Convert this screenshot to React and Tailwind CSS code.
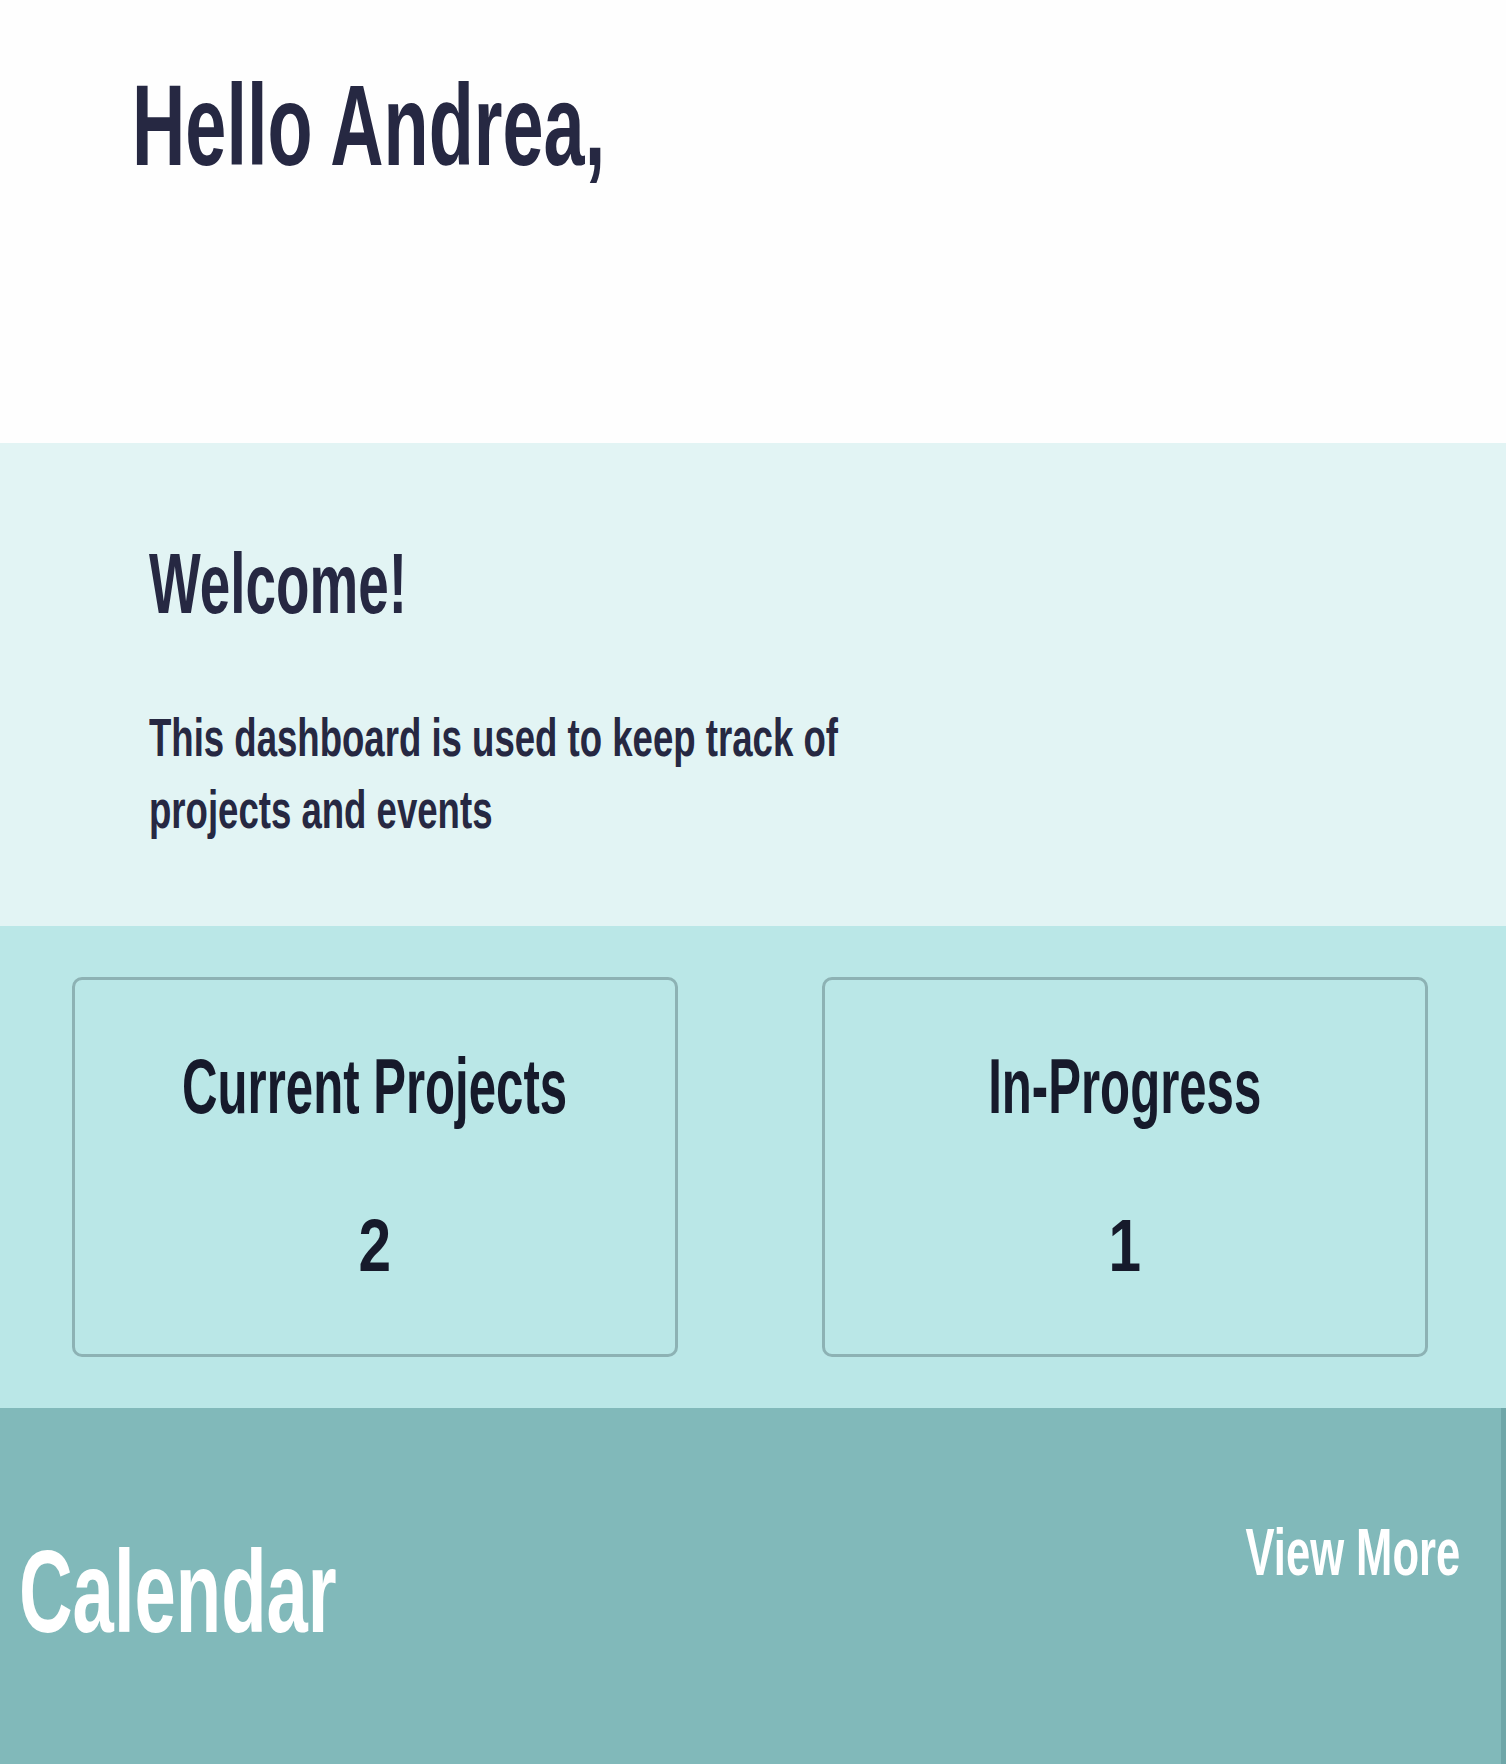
import React from 'react';

// Condensed heading look: Liberation Sans Bold squeezed horizontally
const font = "font-['Liberation_Sans',Arial,sans-serif] font-bold";

const StatCard = ({ title, value }) => (
    <div className="w-[606px] h-[380px] shrink-0 rounded-[10px] border-[3px] border-[#8db2b4] flex flex-col items-center">
        <div className="w-full flex justify-center mt-[67px]">
            <span className={`${font} inline-block whitespace-nowrap text-[78px] leading-none text-[#161a2b] origin-center scale-x-[0.63]`}>
                {title}
            </span>
        </div>
        <div className="w-full flex justify-center mt-[83px]">
            <span className={`${font} inline-block text-[75px] leading-none text-[#161a2b] origin-center scale-x-[0.78]`}>
                {value}
            </span>
        </div>
    </div>
);

const App = () => {
    return (
        <div className="w-full min-h-screen bg-[#fefefe]">
            {/* Greeting */}
            <section className="h-[443px] pt-[68px] pl-[132px] overflow-hidden">
                <h1 className={`${font} inline-block whitespace-nowrap text-[115px] leading-none text-[#262842] origin-left scale-x-[0.642]`}>
                    Hello Andrea,
                </h1>
            </section>

            {/* Welcome blurb */}
            <section className="h-[483px] bg-[#e2f4f4] pt-[98px] pl-[149px] overflow-hidden">
                <h2 className={`${font} block whitespace-nowrap text-[85px] leading-none text-[#262842] origin-left scale-x-[0.645]`}>
                    Welcome!
                </h2>
                <p className={`${font} block whitespace-nowrap text-[53px] leading-[72px] text-[#262842] mt-[76px] origin-left scale-x-[0.69]`}>
                    This dashboard is used to keep track of
                    <br />
                    projects and events
                </p>
            </section>

            {/* Stats */}
            <section className="h-[482px] bg-[#bae7e7] pt-[51px] pl-[72px] flex gap-[144px]">
                <StatCard title="Current Projects" value="2" />
                <StatCard title="In-Progress" value="1" />
            </section>

            {/* Calendar */}
            <section className="h-[356px] bg-[#81b9ba] border-r-[5px] border-[#6ea6a8] flex justify-between items-start overflow-hidden">
                <h2 className={`${font} inline-block whitespace-nowrap text-[116px] leading-none text-white mt-[126px] ml-[19px] origin-left scale-x-[0.64]`}>
                    Calendar
                </h2>
                <a href="#" className={`${font} inline-block whitespace-nowrap text-[67px] leading-none text-white mt-[110px] mr-[41px] origin-right scale-x-[0.65]`}>
                    View More
                </a>
            </section>
        </div>
    );
};

export default App;
